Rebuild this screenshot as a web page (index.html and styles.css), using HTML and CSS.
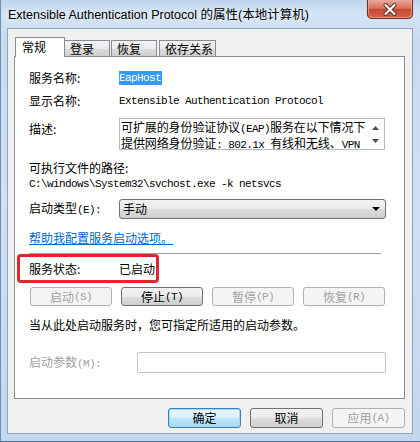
FILE: index.html
```html
<!DOCTYPE html>
<html lang="zh-CN">
<head>
<meta charset="utf-8">
<title>Extensible Authentication Protocol 的属性(本地计算机)</title>
<link rel="stylesheet" href="styles.css">
</head>
<body>
<div class="window">
  <div class="titlebar">
    <span class="title">Extensible Authentication Protocol 的属性(本地计算机)</span>
    <div class="close">
      <svg width="46" height="19" viewBox="0 0 46 19">
        <defs>
          <linearGradient id="cg" x1="0" y1="0" x2="0" y2="1">
            <stop offset="0" stop-color="#e9a99b"/>
            <stop offset="0.45" stop-color="#d7705c"/>
            <stop offset="0.5" stop-color="#c84a33"/>
            <stop offset="1" stop-color="#d2634a"/>
          </linearGradient>
        </defs>
        <path d="M0.5 0 V14 Q0.5 18.5 5 18.5 H41 Q45.5 18.5 45.5 14 V0" fill="url(#cg)" stroke="#6e2b22"/>
        <path d="M1.5 0 V13.5 Q1.5 17.5 5.5 17.5 H40.5 Q44.5 17.5 44.5 13.5 V0" fill="none" stroke="#f1b8a8" stroke-opacity="0.6"/>
        <path d="M18.5 5 L27.5 14 M27.5 5 L18.5 14" stroke="#5a2a24" stroke-width="4" stroke-linecap="round"/>
        <path d="M18.5 5 L27.5 14 M27.5 5 L18.5 14" stroke="#ffffff" stroke-width="2.2" stroke-linecap="round"/>
      </svg>
    </div>
  </div>
  <div class="client">
    <div class="tabs">
      <div class="tab active">常规</div>
      <div class="tab t2">登录</div>
      <div class="tab t3">恢复</div>
      <div class="tab t4">依存关系</div>
    </div>
    <div class="panel">
      <div class="row r1">
        <span class="lbl">服务名称:</span>
        <span class="mono sel">EapHost</span>
      </div>
      <div class="row r2">
        <span class="lbl">显示名称:</span>
        <span class="mono">Extensible Authentication Protocol</span>
      </div>
      <div class="row r3">
        <span class="lbl lbl-top">描述:</span>
        <div class="textarea">
          <div class="ta-text">可扩展的身份验证协议<span class="m">(EAP)</span>服务在以下情况下<br>提供网络身份验证<span class="m">: 802.1x </span>有线和无线、<span class="m">VPN</span></div>
          <div class="scroll">
            <svg width="7" height="4" viewBox="0 0 7 4"><path d="M0 4 L3.5 0 L7 4 Z" fill="#4d4d4d"/></svg>
            <svg width="7" height="4" viewBox="0 0 7 4"><path d="M0 0 L3.5 4 L7 0 Z" fill="#4d4d4d"/></svg>
          </div>
        </div>
      </div>
      <div class="row r4">可执行文件的路径:</div>
      <div class="row r5 mono">C:\windows\System32\svchost.exe -k netsvcs</div>
      <div class="row r6">
        <span class="lbl">启动类型<span class="m">(E):</span></span>
        <div class="select">
          <span>手动</span>
          <svg width="8" height="4" viewBox="0 0 8 4"><path d="M0 0 H8 L4 4 Z" fill="#000"/></svg>
        </div>
      </div>
      <div class="row r7"><span class="link">帮助我配置服务启动选项。</span></div>
      <div class="sep"></div>
      <div class="status">
        <span class="lbl">服务状态:</span>
        <span>已启动</span>
      </div>
      <div class="btnrow">
        <div class="btn dis">启动<span class="m">(S)</span></div>
        <div class="btn">停止<span class="m">(T)</span></div>
        <div class="btn dis">暂停<span class="m">(P)</span></div>
        <div class="btn dis">恢复<span class="m">(R)</span></div>
      </div>
      <div class="row r8">当从此处启动服务时，您可指定所适用的启动参数。</div>
      <div class="row r9">
        <span class="lbl dis-text">启动参数<span class="m">(M):</span></span>
        <div class="input"></div>
      </div>
    </div>
    <div class="footer">
      <div class="btn fbtn default">确定</div>
      <div class="btn fbtn">取消</div>
      <div class="btn fbtn dis">应用<span class="m">(A)</span></div>
    </div>
  </div>
</div>
</body>
</html>
```

FILE: styles.css
```css
* { box-sizing: border-box; }
html, body { margin: 0; padding: 0; }
body {
  width: 420px;
  height: 442px;
  overflow: hidden;
  font-family: "Noto Sans CJK SC", "Noto Sans", sans-serif;
  font-size: 12px;
  color: #000;
}
.window {
  position: relative;
  width: 420px;
  height: 442px;
  background: linear-gradient(to bottom, #bdd3eb 0px, #d4e4f5 14px, #c8dbef 40px, #cfe0f2 200px, #c3d7ed 442px);
  border-left: 1px solid #6d8fb4;
  border-bottom: 1px solid #4f6f93;
  display: flex;
  flex-direction: column;
}
.titlebar {
  height: 28px;
  display: flex;
  align-items: center;
  padding-left: 7px;
}
.title {
  font-family: "Liberation Sans", "Noto Sans CJK SC", sans-serif;
  font-size: 12.5px;
  color: #000;
  line-height: 14px;
  margin-top: 1px;
  text-shadow: 0 0 6px rgba(255,255,255,0.9);
}
.close {
  position: absolute;
  top: 0;
  right: 7px;
  width: 46px;
  height: 19px;
}
.close svg { display: block; }
.client {
  margin-left: 6px;
  width: 406px;
  height: 406px;
  border: 1px solid #8ea5bf;
  background: #f0f0f0;
  display: flex;
  flex-direction: column;
}
.tabs {
  margin-top: 8px;
  margin-left: 7px;
  height: 19px;
  display: flex;
  align-items: flex-end;
  position: relative;
  z-index: 1;
}
.tab {
  height: 16px;
  border: 1px solid #898c95;
  border-bottom: none;
  background: linear-gradient(to bottom, #f3f3f3, #ebebeb 50%, #dddddd 51%, #cfcfcf);
  padding-left: 5px;
  line-height: 15px;
  font-size: 12px;
}
.tab.active {
  width: 50px;
  height: 20px;
  margin-bottom: -1px;
  background: #fff;
  padding-left: 6px;
  line-height: 17px;
}
.tab.t2 { width: 46px; margin-left: -1px; }
.tab.t3 { width: 46px; margin-left: 1px; }
.tab.t4 { width: 57px; margin-left: 2px; }
.panel {
  margin-left: 6px;
  width: 391px;
  height: 343px;
  border: 1px solid #898c95;
  background: #fff;
  padding: 0 18px 0 14px;
  display: flex;
  flex-direction: column;
}
.row {
  display: flex;
  align-items: center;
  height: 16px;
  line-height: 16px;
  white-space: nowrap;
}
.lbl {
  width: 90px;
  flex: none;
}
.mono {
  font-family: "Liberation Mono", monospace;
  font-size: 11px;
  letter-spacing: -0.6px;
}
.m {
  font-family: "Liberation Mono", monospace;
  font-size: 11px;
  letter-spacing: -0.6px;
}
.sel {
  background: #3399ff;
  color: #fff;
  line-height: 14px;
  padding: 0 1px 0 0;
}
.r1 { margin-top: 13px; }
.r2 { margin-top: 7px; }
.r3 {
  margin-top: 9px;
  height: 32px;
  align-items: flex-start;
}
.lbl-top { padding-top: 3px; }
.textarea {
  width: 266px;
  height: 32px;
  border: 1px solid #b5b8bf;
  display: flex;
  background: #fff;
}
.ta-text {
  flex: 1;
  padding: 1px 0 0 1px;
  line-height: 13px;
  font-size: 12px;
  letter-spacing: -0.1px;
}
.scroll {
  width: 17px;
  display: flex;
  flex-direction: column;
  align-items: center;
  justify-content: space-between;
  padding: 7px 0 6px;
  background: #fcfcfc;
}
.scroll svg { display: block; }
.r4 { margin-top: 10px; }
.r5 { height: 15px; }
.r6 { margin-top: 8px; height: 20px; }
.select {
  width: 267px;
  height: 20px;
  border: 1px solid #707070;
  border-radius: 3px;
  background: linear-gradient(to bottom, #f2f2f2, #ebebeb 50%, #dddddd 51%, #cfcfcf);
  display: flex;
  align-items: center;
  justify-content: space-between;
  padding: 0 5px 0 3px;
}
.select svg { display: block; }
.r7 { margin-top: 11px; }
.link {
  color: #0066cc;
  text-decoration: underline;
}
.sep {
  margin-top: 7px;
  height: 1px;
  background: #a0a0a0;
  margin-right: 5px;
  flex: none;
}
.status {
  margin-left: -12px;
  width: 142px;
  height: 29px;
  border: 3px solid #e3262b;
  border-radius: 4px;
  padding-left: 9px;
  display: flex;
  align-items: center;
  flex: none;
}
.btnrow {
  margin-top: 4px;
  display: flex;
  gap: 9px;
  flex: none;
  margin-left: 1px;
}
.btn {
  height: 19px;
  border: 1px solid #707070;
  border-radius: 3px;
  background: linear-gradient(to bottom, #f2f2f2, #ebebeb 50%, #dddddd 51%, #cfcfcf);
  display: flex;
  align-items: center;
  justify-content: center;
  line-height: 16px;
  font-size: 12px;
  flex: none;
}
.btnrow .btn { width: 82px; }
.btn.dis {
  background: #f4f4f4;
  border-color: #adb2b5;
  color: #a0a0a0;
}
.dis-text { color: #a0a0a0; }
.r8 { margin-top: 11px; }
.r9 { margin-top: 19px; height: 21px; }
.r9 .lbl { width: 108px; }
.input {
  width: 249px;
  height: 21px;
  border: 1px solid #c2c4c8;
  border-radius: 2px;
  background: #fff;
}
.footer {
  margin-top: 9px;
  display: flex;
  justify-content: flex-end;
  gap: 9px;
  padding-right: 7px;
}
.fbtn { width: 73px; height: 20px; }
.btn.default {
  border-color: #3c7fb1;
  background: linear-gradient(to bottom, #eaf6fd, #d9f0fc 50%, #bee6fd 51%, #a7d9f5);
  box-shadow: inset 0 0 0 1px #a2d7f7;
}
```
